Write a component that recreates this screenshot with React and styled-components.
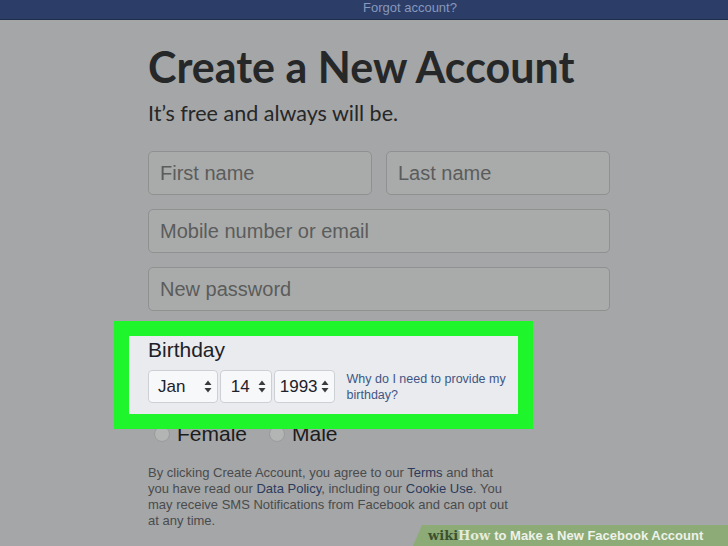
import React from 'react';
import styled, { createGlobalStyle } from 'styled-components';

const Global = createGlobalStyle`
  html, body {
    margin: 0;
    padding: 0;
    background: #a4a6a7;
    font-family: "Liberation Sans", Arial, sans-serif;
    overflow: hidden;
  }
`;

const Page = styled.div`
  position: relative;
  width: 728px;
  height: 546px;
  overflow: hidden;
  background: #a4a6a7;
`;

const TopBar = styled.div`
  height: 19px;
  background: #2c3e67;
  border-bottom: 1px solid #1f2d4d;
  display: flex;
  align-items: center;
`;

const Forgot = styled.a`
  margin-left: 363px;
  font-size: 13px;
  color: #8797bd;
  margin-top: -5px;
`;

const Main = styled.main`
  width: 462px;
  margin-left: 148px;
  display: flex;
  flex-direction: column;
`;

const Heading = styled.h1`
  margin: 25px 0 0;
  font-family: Lato, "Open Sans", sans-serif;
  font-weight: 700;
  font-size: 43px;
  line-height: 43px;
  color: #262728;
`;

const Sub = styled.p`
  margin: 12px 0 0;
  font-family: Lato, "Open Sans", sans-serif;
  font-size: 21.5px;
  line-height: 26px;
  color: #262728;
`;

const Fields = styled.div`
  margin-top: 25px;
  display: grid;
  grid-template-columns: 1fr 1fr;
  gap: 14px;
`;

const Input = styled.div`
  grid-column: ${(p) => (p.$wide ? '1 / -1' : 'auto')};
  height: 44px;
  box-sizing: border-box;
  border: 1px solid #8f9191;
  border-radius: 5px;
  background: #a9abaa;
  padding: 0 11px;
  display: flex;
  align-items: center;
  font-size: 20px;
  color: #5b5c5c;
`;

const Birthday = styled.section`
  position: relative;
  z-index: 1;
  margin: 25px 0 0 -19px;
  width: 389px;
  height: 78px;
  box-sizing: border-box;
  padding: 1px 0 0 19px;
  background: #e9ebee;
  box-shadow: 0 0 0 15px #1ef52a;
`;

const Label = styled.div`
  font-size: 21px;
  line-height: 26px;
  color: #1d2129;
`;

const SelectRow = styled.div`
  margin-top: 7px;
  display: flex;
  align-items: center;
  gap: 2px;
`;

const Select = styled.div`
  width: ${(p) => p.$w}px;
  height: 33px;
  box-sizing: border-box;
  border: 1px solid #ccd0d5;
  border-radius: 4px;
  background: #f7f8fa;
  display: flex;
  align-items: center;
  justify-content: space-between;
  padding: 0 5px 0 ${(p) => p.$pl}px;
  font-size: 17px;
  color: #1d2129;
`;

const Why = styled.a`
  margin-left: 10px;
  width: 172px;
  font-size: 12.5px;
  line-height: 16px;
  color: #3f5685;
`;

const Radios = styled.div`
  margin: 7px 0 0 6px;
  display: flex;
  align-items: center;
  font-size: 21px;
  line-height: 26px;
  color: #1b1c1d;
`;

const Radio = styled.span`
  width: 14px;
  height: 14px;
  border-radius: 50%;
  border: 1px solid #9a9c9c;
  background: #b3b5b5;
  margin-right: ${(p) => p.$mr}px;
`;

const Gender = styled.span`
  margin-right: ${(p) => p.$mr}px;
`;

const Terms = styled.p`
  margin: 18px 0 0;
  width: 365px;
  font-size: 13px;
  line-height: 16px;
  color: #4a4b4d;
  a {
    color: #2c3a5c;
  }
`;

const Banner = styled.div`
  position: absolute;
  right: 0;
  bottom: 0;
  width: 315px;
  height: 21px;
  background: #8dab76;
  clip-path: polygon(9px 0, 100% 0, 100% 100%, 0 100%);
  display: flex;
  align-items: center;
  padding-left: 15px;
  box-sizing: border-box;
  font-size: 13px;
  font-weight: 700;
  color: #eef2ea;
  white-space: nowrap;
`;

const Wiki = styled.span`
  font-family: "DejaVu Serif", "Liberation Serif", serif;
  font-size: 13px;
  color: #3c5130;
`;

const How = styled.span`
  font-family: "DejaVu Serif", "Liberation Serif", serif;
  font-size: 13px;
  color: #e4ecdc;
  margin-right: 4px;
`;

const Arrows = () => (
  <svg width="8" height="13" viewBox="0 0 8 13">
    <path d="M4 0.5 L7.5 5 H0.5 Z" fill="#3a3b3d" />
    <path d="M4 12.5 L7.5 8 H0.5 Z" fill="#3a3b3d" />
  </svg>
);

export default function App() {
  return (
    <Page>
      <Global />
      <TopBar>
        <Forgot>Forgot account?</Forgot>
      </TopBar>
      <Main>
        <Heading>Create a New Account</Heading>
        <Sub>It’s free and always will be.</Sub>
        <Fields>
          <Input>First name</Input>
          <Input>Last name</Input>
          <Input $wide>Mobile number or email</Input>
          <Input $wide>New password</Input>
        </Fields>
        <Birthday>
          <Label>Birthday</Label>
          <SelectRow>
            <Select $w={70} $pl={9}>
              Jan <Arrows />
            </Select>
            <Select $w={52} $pl={10}>
              14 <Arrows />
            </Select>
            <Select $w={61} $pl={5}>
              1993 <Arrows />
            </Select>
            <Why>Why do I need to provide my birthday?</Why>
          </SelectRow>
        </Birthday>
        <Radios>
          <Radio $mr={7} />
          <Gender $mr={22}>Female</Gender>
          <Radio $mr={7} />
          <Gender>Male</Gender>
        </Radios>
        <Terms>
          By clicking Create Account, you agree to our <a>Terms</a> and that
          you have read our <a>Data Policy</a>, including our <a>Cookie Use</a>.
          You may receive SMS Notifications from Facebook and can opt out at
          any time.
        </Terms>
      </Main>
      <Banner>
        <Wiki>wiki</Wiki>
        <How>How</How>
        to Make a New Facebook Account
      </Banner>
    </Page>
  );
}
